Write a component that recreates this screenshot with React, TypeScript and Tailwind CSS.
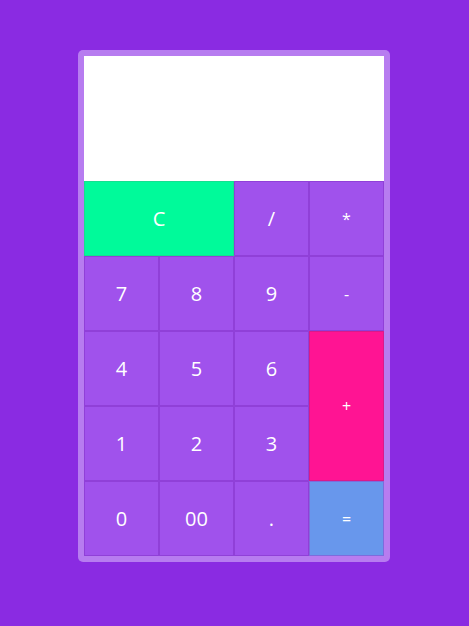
import React from "react";

type K = { label: string; cls?: string; span?: string; small?: boolean };

const keys: K[] = [
  { label: "C", cls: "bg-[#00fa9a] border-[#14e08f]", span: "col-span-2" },
  { label: "/" },
  { label: "*", small: true },
  { label: "7" },
  { label: "8" },
  { label: "9" },
  { label: "-", small: true },
  { label: "4" },
  { label: "5" },
  { label: "6" },
  { label: "+", small: true, cls: "bg-[#ff1493] border-[#d91a8a]", span: "row-span-2" },
  { label: "1" },
  { label: "2" },
  { label: "3" },
  { label: "0" },
  { label: "00" },
  { label: "." },
  { label: "=", small: true, cls: "bg-[#6897ec] border-[#7d6cdc]" },
];

export default function App() {
  return (
    <div
      className="w-[469px] h-[626px] bg-[#8a2be2] flex pl-[78px] pt-[50px]"
      style={{ fontFamily: '"Open Sans", "Liberation Sans", sans-serif' }}
    >
      <div className="w-[312px] h-[512px] bg-[#b77cf0] rounded-[5px] p-[6px] flex flex-col">
        <div className="h-[125px] bg-white" />
        <div className="grid grid-cols-[repeat(4,75px)] grid-rows-[repeat(5,75px)]">
          {keys.map((k) => (
            <div
              key={k.label}
              className={`${k.span ?? ""} ${k.cls ?? "bg-[#a052ec] border-[#9040d8]"} border flex items-center justify-center text-white ${k.small ? "text-[16px]" : "text-[20px]"}`}
            >
              {k.label}
            </div>
          ))}
        </div>
      </div>
    </div>
  );
}
